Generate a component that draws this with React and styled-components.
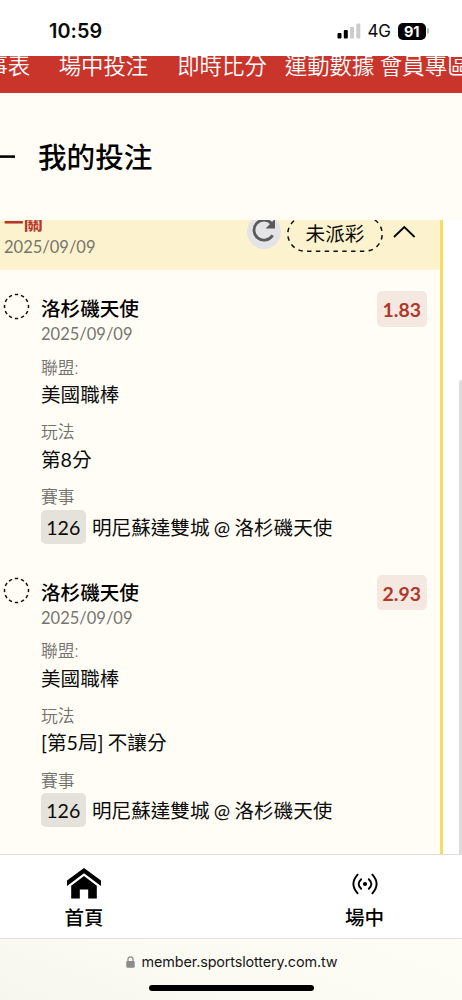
import styled, { createGlobalStyle } from "styled-components";

const GlobalStyle = createGlobalStyle`
  * {
    box-sizing: border-box;
  }
  body {
    margin: 0;
    background: #fff;
    font-family: Lato, "Noto Sans CJK TC", sans-serif;
    color: #0b0b0b;
  }
`;

const Page = styled.div`
  width: 462px;
  height: 1000px;
  overflow: hidden;
  display: flex;
  flex-direction: column;
  white-space: nowrap;
`;

const StatusBar = styled.div`
  height: 55.5px;
  flex: none;
  display: flex;
  align-items: center;
  padding: 7px 33px 0 49px;
  font-family: Inter, sans-serif;
`;
const Clock = styled.div`
  flex: 1;
  font-size: 19.8px;
  font-weight: 600;
  letter-spacing: 0.1px;
`;
const Network = styled.div`
  width: 22px;
  margin: 0 8px 0 7px;
  font-size: 17px;
  letter-spacing: -0.3px;
`;
const Battery = styled.div`
  width: 28.5px;
  height: 17px;
  border-radius: 5px;
  background: #000;
  color: #fff;
  font-size: 14.5px;
  line-height: 17px;
  font-weight: 700;
  text-align: center;
`;
const BatteryTip = styled.div`
  width: 2px;
  height: 6px;
  margin-left: 1px;
  border-radius: 0 2px 2px 0;
  background: #bbb;
`;

const TopNav = styled.nav`
  height: 37.5px;
  flex: none;
  display: flex;
  overflow: hidden;
  background: #c9342b;
  color: #fff;
`;
const NavItem = styled.a`
  flex: none;
  margin-left: ${(p) => p.$gap}px;
  font-size: 22.4px;
  font-weight: 350;
  line-height: 20px;
`;

const TitleBar = styled.header`
  height: 127px;
  flex: none;
  display: flex;
  align-items: center;
  background: #fffdf5;
`;
const BackLine = styled.svg`
  width: 15px;
  height: 4px;
  margin-right: 23px;
`;
const Title = styled.h1`
  margin: 1px 0 0;
  font-size: 28.6px;
  line-height: 40px;
  font-weight: 500;
  color: #000;
`;

const Scroller = styled.main`
  flex: 1;
  min-height: 0;
  position: relative;
  overflow: hidden;
  background: #fff;
`;
const ScrollThumb = styled.div`
  position: absolute;
  top: 160px;
  right: 0;
  bottom: 0;
  width: 3px;
  border-radius: 2px 0 0 0;
  background: #dcdcdc;
`;
const Ticket = styled.section`
  width: 442.5px;
  height: 100%;
  border-right: 3px solid #f8dc5c;
  background: #fffdf5;
`;
const TicketHead = styled.div`
  height: 50px;
  display: flex;
  background: #fcf2cd;
`;
const TicketInfo = styled.div`
  width: 246.5px;
  padding-left: 4px;
`;
const Parlay = styled.div`
  height: 14px;
  font-size: 19.6px;
  line-height: 6px;
  font-weight: 700;
  color: #b5372b;
`;
const DateText = styled.div`
  font-size: 16.5px;
  line-height: ${(p) => p.$height}px;
  color: #77756e;
`;
const Refresh = styled.button`
  width: 34px;
  height: 34px;
  margin: -5.5px 6px 0 0;
  padding: 0;
  border: 0;
  border-radius: 50%;
  background: #e4e4e6;
  svg {
    display: block;
  }
`;
const Status = styled.div`
  position: relative;
  width: 96px;
  height: 36px;
  margin-top: -4.5px;
  padding-left: 1px;
  font-size: 19.6px;
  line-height: 35px;
  text-align: center;
`;
const StatusOutline = styled.svg`
  position: absolute;
  inset: 0;
`;
const Caret = styled.svg`
  margin: 3.5px 0 0 9.5px;
`;

const Legs = styled.div`
  padding-top: 21px;
`;
const Leg = styled.article`
  height: 283.5px;
  padding: 0 12.5px 0 3px;
  display: flex;
  align-items: flex-start;
`;
const Ring = styled.svg`
  flex: none;
  margin: 2.2px 11px 0 0;
`;
const LegBody = styled.div`
  flex: 1;
`;
const Team = styled.div`
  padding-top: 1px;
  font-size: 19.6px;
  line-height: 34px;
  font-weight: 500;
  color: #000;
`;
const Odds = styled.div`
  width: 50.5px;
  height: 35.5px;
  border-radius: 5px;
  background: #f5e8e1;
  color: #ad382b;
  font-size: 19.4px;
  line-height: 37px;
  font-weight: 700;
  text-align: center;
`;
const Field = styled.div`
  height: 55px;
  margin-top: ${(p) => (p.$first ? 12.7 : 9.8)}px;
`;
const Label = styled.div`
  font-size: 16.8px;
  line-height: 25px;
  font-weight: 350;
  color: #73726d;
`;
const Value = styled.div`
  height: 30px;
  display: flex;
  align-items: center;
  font-size: 19.6px;
  line-height: 31px;
  word-spacing: -0.8px;
`;
const GameNo = styled.span`
  width: 45.5px;
  height: 34px;
  margin: 5px 6px 0 -0.5px;
  border-radius: 5px;
  background: #e5e2dc;
  line-height: 35px;
  text-align: center;
`;
const Matchup = styled.span`
  padding-top: 5.5px;
`;

const TabBar = styled.footer`
  height: 85px;
  flex: none;
  display: flex;
  border-top: 1px solid #dededb;
  border-bottom: 1px solid #e2e2de;
  background: #fff;
`;
const Tab = styled.div`
  width: ${(p) => p.$width}px;
  margin-left: ${(p) => p.$left}px;
  display: flex;
  flex-direction: column;
  align-items: center;
  font-size: 19.6px;
  line-height: 30px;
  font-weight: 500;
  color: #000;
`;
const TabIcon = styled.div`
  height: 48px;
  padding-top: ${(p) => p.$top}px;
  svg {
    display: block;
  }
`;

const BrowserBar = styled.div`
  height: 61px;
  flex: none;
  display: flex;
  flex-direction: column;
  align-items: center;
  background: linear-gradient(20deg, #f7f6ee 0%, #fcfbf3 45%, #fdfcf5 100%);
  font-family: Inter, sans-serif;
`;
const Address = styled.div`
  height: 45.5px;
  padding-left: 1px;
  display: flex;
  align-items: center;
  gap: 7px;
  font-size: 14.4px;
  letter-spacing: -0.13px;
  color: #171717;
`;
const HomeIndicator = styled.div`
  width: 165px;
  height: 6px;
  border-radius: 3px;
  background: #000;
`;

const navItems = [
  { text: "賽事表", gap: -37 },
  { text: "場中投注", gap: 28.5 },
  { text: "即時比分", gap: 29 },
  { text: "運動數據", gap: 18 },
  { text: "會員專區", gap: 5.5 },
];

const legs = [
  { odds: "1.83", play: "第8分" },
  { odds: "2.93", play: "[第5局] 不讓分" },
];

const Signal = () => (
  <svg width="24" height="16" viewBox="0 0 24 16">
    <rect x="0.5" y="10" width="4" height="5.5" rx="1" fill="#000" />
    <rect x="6.8" y="7" width="4" height="8.5" rx="1" fill="#000" />
    <rect x="13" y="3.8" width="4" height="11.7" rx="1" fill="#ccc" />
    <rect x="19.3" y="0.5" width="4" height="15" rx="1" fill="#ccc" />
  </svg>
);

const RefreshIcon = () => (
  <svg width="34" height="34" viewBox="0 0 34 34" fill="none">
    <path
      d="M24.5 8.5A10 10 0 1 0 25.6 20.2"
      stroke="#5a5a5a"
      strokeWidth="2.8"
    />
    <path d="M28 4V13.4H18.6Z" fill="#5a5a5a" />
  </svg>
);

const HomeIcon = () => (
  <svg width="34" height="31" viewBox="0 0 34 31" fill="#000">
    <path d="M17 0L34 12.5V18L17 5.3L0 18V12.5Z" />
    <path d="M17 8L29.8 17.7V30.5H21.2V21.5H12.8V30.5H4.2V17.7Z" />
  </svg>
);

const LiveIcon = () => (
  <svg
    width="26"
    height="22"
    viewBox="0 0 26 22"
    fill="none"
    stroke="#000"
    strokeWidth="1.9"
    strokeLinecap="round"
  >
    <circle cx="13" cy="11" r="2.1" fill="#000" stroke="none" />
    <path d="M9.2 6.2Q4.1 11 9.2 15.8M16.8 6.2Q21.9 11 16.8 15.8" />
    <path d="M5.6 1.7Q-2.8 11 5.6 20.3M20.4 1.7Q28.8 11 20.4 20.3" />
  </svg>
);

const LockIcon = () => (
  <svg width="9" height="12" viewBox="0 0 9 12" fill="none">
    <rect x="0.3" y="5" width="8.4" height="6.8" rx="1.3" fill="#8c8c88" />
    <path d="M2 5.5V3.3A2.5 2.5 0 0 1 7 3.3V5.5" stroke="#8c8c88" strokeWidth="1.3" />
  </svg>
);

const LegView = ({ leg }) => (
  <Leg>
    <Ring width="27" height="27" viewBox="0 0 27 27" fill="none">
      <circle
        cx="13.5"
        cy="13.5"
        r="12"
        stroke="#111"
        strokeWidth="1.5"
        pathLength="96"
        strokeDasharray="4.4 3.6"
        strokeDashoffset="2.2"
      />
    </Ring>
    <LegBody>
      <Team>洛杉磯天使</Team>
      <DateText $height={16}>2025/09/09</DateText>
      <Field $first>
        <Label>聯盟:</Label>
        <Value>美國職棒</Value>
      </Field>
      <Field>
        <Label>玩法</Label>
        <Value>{leg.play}</Value>
      </Field>
      <Field>
        <Label>賽事</Label>
        <Value>
          <GameNo>126</GameNo>
          <Matchup>明尼蘇達雙城 @ 洛杉磯天使</Matchup>
        </Value>
      </Field>
    </LegBody>
    <Odds>{leg.odds}</Odds>
  </Leg>
);

const App = () => (
  <>
    <GlobalStyle />
    <Page>
      <StatusBar>
        <Clock>10:59</Clock>
        <Signal />
        <Network>4G</Network>
        <Battery>91</Battery>
        <BatteryTip />
      </StatusBar>
      <TopNav>
        {navItems.map((item) => (
          <NavItem key={item.text} $gap={item.gap}>
            {item.text}
          </NavItem>
        ))}
      </TopNav>
      <TitleBar>
        <BackLine viewBox="0 0 15 4">
          <path d="M0 1.6H15" stroke="#000" strokeWidth="2.6" />
        </BackLine>
        <Title>我的投注</Title>
      </TitleBar>
      <Scroller>
        <Ticket>
          <TicketHead>
            <TicketInfo>
              <Parlay>一關</Parlay>
              <DateText $height={27}>2025/09/09</DateText>
            </TicketInfo>
            <Refresh>
              <RefreshIcon />
            </Refresh>
            <Status>
              <StatusOutline width="96" height="36" viewBox="0 0 96 36" fill="none">
                <rect
                  x="0.8"
                  y="0.8"
                  width="94.4"
                  height="34.4"
                  rx="17.2"
                  stroke="#111"
                  strokeWidth="1.5"
                  strokeDasharray="4.4 4.4"
                />
              </StatusOutline>
              未派彩
            </Status>
            <Caret width="24" height="16" viewBox="0 0 24 16" fill="none">
              <path d="M2 13L12.3 3L22.6 13" stroke="#000" strokeWidth="1.8" />
            </Caret>
          </TicketHead>
          <Legs>
            {legs.map((leg) => (
              <LegView key={leg.odds} leg={leg} />
            ))}
          </Legs>
        </Ticket>
        <ScrollThumb />
      </Scroller>
      <TabBar>
        <Tab $left={44} $width={80}>
          <TabIcon $top={13}>
            <HomeIcon />
          </TabIcon>
          首頁
        </Tab>
        <Tab $left={200.5} $width={80}>
          <TabIcon $top={18}>
            <LiveIcon />
          </TabIcon>
          場中
        </Tab>
      </TabBar>
      <BrowserBar>
        <Address>
          <LockIcon />
          member.sportslottery.com.tw
        </Address>
        <HomeIndicator />
      </BrowserBar>
    </Page>
  </>
);

export default App;
